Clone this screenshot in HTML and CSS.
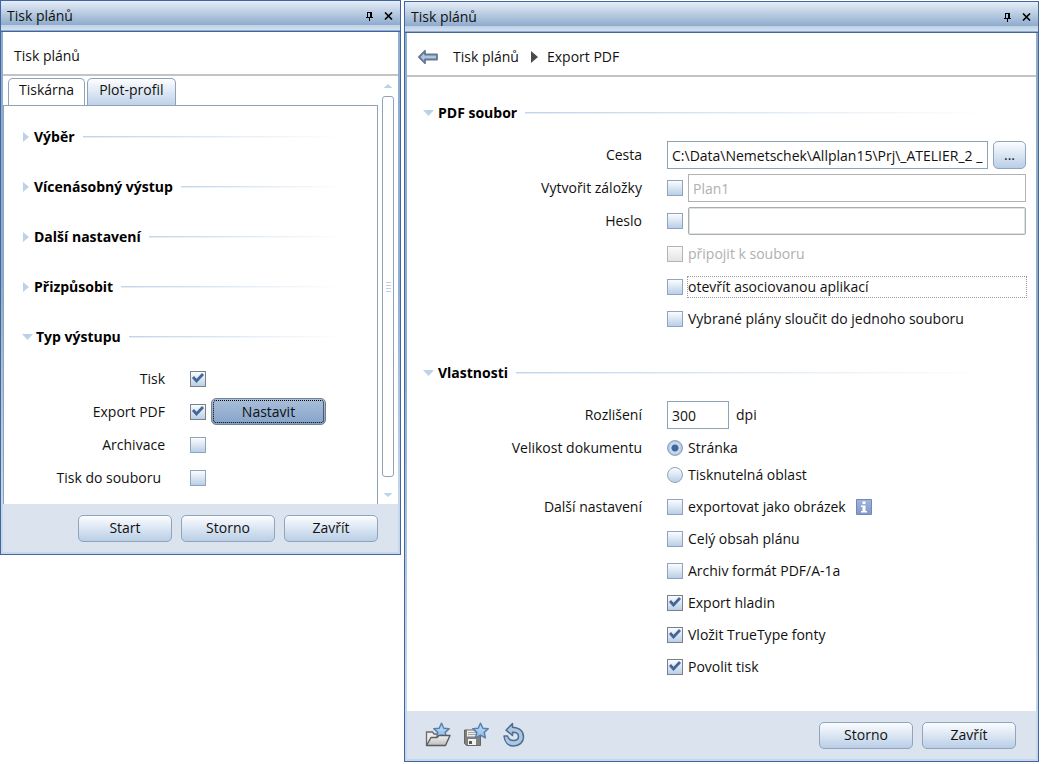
FILE: index.html
```html
<!DOCTYPE html>
<html lang="cs">
<head>
<meta charset="utf-8">
<title>Tisk plánů</title>
<link rel="stylesheet" href="styles.css">
</head>
<body>
<section class="panel panel-side">
  <div class="titlebar">
    <span class="titlebar-text">Tisk plánů</span>
    <button class="win-btn" aria-label="Připnout"><svg width="7" height="9" viewBox="0 0 7 9" shape-rendering="crispEdges"><path d="M1 0h5v5h1v1H4v3H3V6H0V5h1zM2 1v4h2V1z" fill-rule="evenodd"/></svg></button>
    <button class="win-btn" aria-label="Zavřít panel"><svg width="9" height="8" viewBox="0 0 9 8"><path d="M1 .5l7 7M8 .5l-7 7" stroke="#000" stroke-width="1.6"/></svg></button>
  </div>
  <div class="inner">
    <header class="crumbs crumbs-side">Tisk plánů</header>
    <div class="side-body">
      <div class="tab-area">
        <div class="tabs" role="tablist">
          <button class="tab tab-active" role="tab" aria-selected="true">Tiskárna</button>
          <button class="tab" role="tab" aria-selected="false">Plot-profil</button>
        </div>
        <div class="pane">
          <h2 class="heading"><button class="fold"><span class="tri tri-right"></span>Výběr</button></h2>
          <h2 class="heading"><button class="fold"><span class="tri tri-right"></span>Vícenásobný výstup</button></h2>
          <h2 class="heading"><button class="fold"><span class="tri tri-right"></span>Další nastavení</button></h2>
          <h2 class="heading"><button class="fold"><span class="tri tri-right"></span>Přizpůsobit</button></h2>
          <h2 class="heading"><button class="fold"><span class="tri tri-down"></span>Typ výstupu</button></h2>
          <div class="outputs">
            <div class="output"><label for="o1">Tisk</label><input type="checkbox" id="o1" checked></div>
            <div class="output"><label for="o2">Export PDF</label><input type="checkbox" id="o2" checked><button class="btn btn-pressed">Nastavit</button></div>
            <div class="output"><label for="o3">Archivace</label><input type="checkbox" id="o3"></div>
            <div class="output"><label class="label-inset" for="o4">Tisk do souboru</label><input type="checkbox" id="o4"></div>
          </div>
        </div>
      </div>
      <div class="scroll">
        <span class="scroll-up"></span>
        <div class="thumb"><span class="grip"></span></div>
        <span class="scroll-down"></span>
      </div>
    </div>
    <footer class="footer">
      <button class="btn">Start</button>
      <button class="btn">Storno</button>
      <button class="btn">Zavřít</button>
    </footer>
  </div>
</section>

<section class="panel panel-main">
  <div class="titlebar">
    <span class="titlebar-text">Tisk plánů</span>
    <button class="win-btn" aria-label="Připnout"><svg width="7" height="9" viewBox="0 0 7 9" shape-rendering="crispEdges"><path d="M1 0h5v5h1v1H4v3H3V6H0V5h1zM2 1v4h2V1z" fill-rule="evenodd"/></svg></button>
    <button class="win-btn" aria-label="Zavřít panel"><svg width="9" height="8" viewBox="0 0 9 8"><path d="M1 .5l7 7M8 .5l-7 7" stroke="#000" stroke-width="1.6"/></svg></button>
  </div>
  <div class="inner">
    <header class="crumbs">
      <button class="back" aria-label="Zpět"><svg width="22" height="16" viewBox="0 0 22 16"><path d="M2 8 8 1.800V5.500h12v5H8v3.700z" fill="#a9c6e6" stroke="#66788e" stroke-width="1.800" stroke-linejoin="round"/></svg></button>
      <span>Tisk plánů</span>
      <svg class="crumb-sep" width="7" height="12" viewBox="0 0 7 12"><path d="M0 0l7 6-7 6z" fill="#484a4e"/></svg>
      <span>Export PDF</span>
    </header>
    <form class="form">
      <h2 class="heading"><button type="button" class="fold"><span class="tri tri-down"></span>PDF soubor</button></h2>
      <div class="rows">
        <div class="row"><label class="name" for="path">Cesta</label><div class="field"><input class="text grow" type="text" id="path" value="C:\Data\Nemetschek\Allplan15\Prj\_ATELIER_2 _"><button type="button" class="btn btn-more">...</button></div></div>
        <div class="row"><label class="name" for="marks">Vytvořit záložky</label><div class="field"><input type="checkbox" id="marks"><input class="text grow text-off" type="text" aria-label="Název záložky" value="Plan1" disabled></div></div>
        <div class="row"><label class="name" for="pass">Heslo</label><div class="field"><input type="checkbox" id="pass"><input class="text grow text-sunken" type="password" aria-label="Heslo" disabled></div></div>
        <div class="row"><div class="field"><input type="checkbox" id="attach" disabled><label class="off" for="attach">připojit k souboru</label></div></div>
        <div class="row row-low"><div class="field"><input type="checkbox" id="open"><label class="focused" for="open">otevřít asociovanou aplikací</label></div></div>
        <div class="row row-low"><div class="field"><input type="checkbox" id="merge"><label for="merge">Vybrané plány sloučit do jednoho souboru</label></div></div>
      </div>
      <h2 class="heading"><button type="button" class="fold"><span class="tri tri-down"></span>Vlastnosti</button></h2>
      <div class="rows rows-last">
        <div class="row"><label class="name" for="dpi">Rozlišení</label><div class="field"><input class="text text-dpi" type="text" id="dpi" value="300"><span class="unit">dpi</span></div></div>
        <div class="row-pair" role="radiogroup" aria-labelledby="size">
          <div class="row row-low"><span class="name" id="size">Velikost dokumentu</span><div class="field"><input type="radio" name="size" id="page" checked><label for="page">Stránka</label></div></div>
          <div class="row row-low"><div class="field"><input type="radio" name="size" id="area"><label for="area">Tisknutelná oblast</label></div></div>
        </div>
        <div class="row row-low"><span class="name">Další nastavení</span><div class="field"><input type="checkbox" id="img"><label for="img">exportovat jako obrázek</label><svg class="info" width="16" height="16" viewBox="0 0 16 16"><defs><linearGradient id="ig" x2="0" y2="1"><stop stop-color="#a3b5d9"/><stop offset="1" stop-color="#8199c8"/></linearGradient></defs><path d="M.5.5h15v15H.5z" fill="url(#ig)" stroke="#7189b8"/><path d="M6.500 2.500h3v2.500h-3zM5 6.500h4.500V12H11v1.500H5V12h1.500V8H5z" fill="#fff"/></svg></div></div>
        <div class="row row-low"><div class="field"><input type="checkbox" id="all"><label for="all">Celý obsah plánu</label></div></div>
        <div class="row row-low"><div class="field"><input type="checkbox" id="pdfa"><label for="pdfa">Archiv formát PDF/A-1a</label></div></div>
        <div class="row row-low"><div class="field"><input type="checkbox" id="layers" checked><label for="layers">Export hladin</label></div></div>
        <div class="row row-low"><div class="field"><input type="checkbox" id="fonts" checked><label for="fonts">Vložit TrueType fonty</label></div></div>
        <div class="row row-low"><div class="field"><input type="checkbox" id="print" checked><label for="print">Povolit tisk</label></div></div>
      </div>
    </form>
    <footer class="footer">
      <div class="tools">
        <button class="tool" aria-label="Načíst oblíbené"><svg width="26" height="26" viewBox="0 0 26 26"><defs><linearGradient id="sg" x2="0" y2="1"><stop stop-color="#c5e0fa"/><stop offset="1" stop-color="#8db9e6"/></linearGradient><linearGradient id="fg" x2="0" y2="1"><stop stop-color="#f2f2f2"/><stop offset="1" stop-color="#bdbdbd"/></linearGradient></defs><path d="M1.500 23.500V10h6l1.500 2H19v3" fill="#ececec" stroke="#696969" stroke-width="1.300"/><path d="M16.500 1.200l2.300 5 5.400.5-4 3.700 1.200 5.400-4.900-2.700-4.900 2.700 1.200-5.400-4-3.700 5.400-.5z" fill="url(#sg)" stroke="#5a7fab" stroke-width="1.500" stroke-linejoin="round"/><path d="M1.500 23.500L6 15.500h6l2-2h11l-4.500 10z" fill="url(#fg)" stroke="#5c5c5c" stroke-width="1.400" stroke-linejoin="round"/></svg></button>
        <button class="tool" aria-label="Uložit oblíbené"><svg width="26" height="26" viewBox="0 0 26 26"><path d="M1.500 8h16v15.500h-14l-2-2z" fill="#808080" stroke="#656565"/><path d="M4 8.500h11v6H4z" fill="#eee"/><path d="M5 10.500h8M5 12.500h9" stroke="#a5a5a5"/><path d="M5 17h8v6H5z" fill="#f0f0f0"/><path d="M6 19h3v3H6z" fill="#585858"/><path d="M17.500 1.200l2.300 5 5.400.5-4 3.700 1.200 5.400-4.900-2.700-4.900 2.700 1.200-5.400-4-3.700 5.400-.5z" fill="url(#sg)" stroke="#5a7fab" stroke-width="1.500" stroke-linejoin="round"/></svg></button>
        <button class="tool" aria-label="Obnovit"><svg width="26" height="26" viewBox="0 0 26 26"><path d="M11.500 1.500L5 8.200l6.500 5.300v-3.200c4 0 6 2 6 4.200 0 2.500-2.200 4-5 4-3 0-5-1.500-6-4.500H3c.5 6.500 4.500 10 9.500 10 6 0 10-4 10-9 0-5.500-4-9.500-11-9.800z" fill="#a7c8e9" stroke="#536c89" stroke-width="1.500" stroke-linejoin="round"/></svg></button>
      </div>
      <button class="btn">Storno</button>
      <button class="btn">Zavřít</button>
    </footer>
  </div>
</section>
</body>
</html>
```
FILE: styles.css
```css
* { box-sizing: border-box; }

body {
  margin: 0;
  min-height: 100vh;
  padding: 0 2px 2px 0;
  display: flex;
  align-items: flex-start;
  gap: 3px;
  background: #fff;
  color: #111;
  font: 14px/20px "Open Sans", "Noto Sans", sans-serif;
}

button, input { font: inherit; color: inherit; margin: 0; }
button { padding: 0; border: 0; background: none; }

.panel {
  display: flex;
  flex-direction: column;
  border: 1px solid #41659c;
  background: linear-gradient(#8fadcf 0%, #8fadcf 50%, #c6d8eb 90%);
}
.panel-side { flex: 0 1 401px; }
.panel-main { flex: 1; align-self: stretch; margin-top: 1px; }

.titlebar {
  display: flex;
  align-items: center;
  gap: 8px;
  height: 31px;
  padding: 0 6px;
  border-bottom: 1px solid #41659c;
  background:
    linear-gradient(#8eaccf, #8eaccf) 0 29px / 100% 1px no-repeat,
    linear-gradient(#bed0e5, #d3e0ef) 0 24px / 100% 5px no-repeat,
    linear-gradient(#e5edf7, #8eabcd) 0 0 / 100% 24px no-repeat;
}
.titlebar-text { flex: 1; }
.win-btn { width: 11px; height: 20px; display: grid; place-items: center; }

.inner {
  flex: 1;
  display: flex;
  flex-direction: column;
  margin: 0 2px 2px;
  background: #fff;
}

.crumbs {
  display: flex;
  align-items: center;
  height: 44px;
  padding: 5px 10px 0;
  border-bottom: 2px solid #c4c4c4;
}
.crumbs-side { padding-left: 11px; }
.back { margin-right: 14px; display: grid; }
.crumb-sep { margin: 0 9px 0 12px; }

.side-body { display: flex; padding-top: 2px; }
.tab-area { flex: 1; min-width: 0; }
.tabs { display: flex; gap: 2px; padding-left: 5px; }
.tab {
  height: 27px;
  padding: 0 11px 4px;
  border: 1px solid #8fa2b8;
  border-bottom: 0;
  border-radius: 5px 5px 0 0;
  background: linear-gradient(#fdfdff, #bed2e9);
}
.tab-active { padding: 0 10px 4px; background: #fff; }
.pane {
  padding: 21px 34px 10px 18px;
  border: 1px solid #8fa2b8;
  border-bottom: 0;
}

.heading {
  display: flex;
  align-items: center;
  gap: 8px;
  margin: 0;
  font-size: 14px;
  font-weight: 700;
}
.heading::after {
  content: "";
  flex: 1;
  height: 2px;
  background:
    linear-gradient(90deg, #c0d5ea, #fff) 0 0 / 100% 1px no-repeat,
    linear-gradient(90deg, #e4edf6, #fff);
}
.pane .heading + .heading { margin-top: 30px; }
.fold { display: flex; align-items: center; font-weight: 700; color: #000; }
.tri { width: 12px; height: 10px; }
.tri::before { content: ""; display: block; background: #bcd2ea; }
.tri-right::before { width: 6px; height: 10px; margin-left: 1px; clip-path: polygon(0 0, 100% 50%, 0 100%); }
.tri-down { width: 15px; height: 6px; }
.pane .tri-down { width: 14px; }
.tri-down::before { width: 11px; height: 6px; clip-path: polygon(0 0, 100% 0, 50% 100%); }

.outputs { padding-top: 15px; }
.output { display: flex; align-items: center; height: 33px; }
.output label { width: 143px; margin-right: 25px; text-align: right; }
.output .label-inset { padding-right: 4px; }
.output .btn { width: 115px; margin-left: 5px; }

.scroll {
  width: 20px;
  padding: 6px 4px 7px;
  display: flex;
  flex-direction: column;
  align-items: center;
  gap: 8px;
}
.scroll-up, .scroll-down { width: 9px; height: 4px; background: #bcd2ea; clip-path: polygon(50% 0, 100% 100%, 0 100%); }
.scroll-down { margin-top: 8px; clip-path: polygon(0 0, 100% 0, 50% 100%); }
.thumb {
  flex: 1;
  align-self: stretch;
  display: grid;
  place-items: center;
  border: 1px solid #8fa2b8;
  border-radius: 3px;
}
.grip { width: 5px; height: 10px; background: repeating-linear-gradient(#bcd2ea 0 1px, #fff 1px 3px); }

.footer {
  display: flex;
  align-items: center;
  justify-content: flex-end;
  gap: 9px;
  height: 48px;
  padding-right: 20px;
  background: #dbe3ee;
}
.footer .btn { width: 94px; }
.tools { margin-right: auto; padding-left: 18px; display: flex; gap: 12px; }
.tool { display: grid; }

.btn {
  height: 27px;
  border: 1px solid #8fa5bd;
  border-radius: 5px;
  background: linear-gradient(#fcfdff, #b9cee6);
}
.btn-more { width: 33px; height: 28px; }
.btn-pressed {
  border-color: #74818f;
  background: linear-gradient(#a9bfdb, #86a3c8);
  outline: 1px dotted #000;
  outline-offset: -3px;
}

.form { flex: 1; padding: 26px 10px 0 16px; }
.form .heading { margin-right: 34px; }
.rows { padding: 18px 0 31px 1px; display: flex; flex-direction: column; gap: 5px; }
.rows-last { padding-bottom: 16px; }
.row { display: grid; grid-template-columns: 218px 1fr; column-gap: 25px; align-items: center; height: 28px; }
.row-low { height: 27px; }
.name { text-align: right; }
.field { grid-column: 2; min-width: 0; display: flex; align-items: center; gap: 5px; }
.grow { flex: 1; min-width: 0; }
.off { color: #b0b0b0; }
.focused { flex: 1; outline: 1px dotted #999; }
.unit { margin-left: 2px; }
.info { margin-left: 5px; }

.text { height: 28px; padding: 0 4px; border: 1px solid #8fa2b8; border-radius: 0; background: #fff; }
.text-dpi { width: 62px; }
.text-off { border-color: #b2b2b2; color: #b0b0b0; }
.text-sunken { border-color: #a9aeb0; border-radius: 2px; box-shadow: inset 0 0 0 1px #dfe3e3; }

input[type="checkbox"], input[type="radio"] {
  appearance: none;
  flex: none;
  width: 16px;
  height: 16px;
  border: 1px solid #8fa5bd;
  background: linear-gradient(#fbfcfe, #b9cfe7);
}
input[type="checkbox"]:checked {
  border-color: #7c8087;
  background:
    url("data:image/svg+xml,%3Csvg xmlns='http://www.w3.org/2000/svg' viewBox='0 0 14 14'%3E%3Cpath d='M2 5l3.500 4L12 2' fill='none' stroke='%23436699' stroke-width='2.800'/%3E%3C/svg%3E"),
    linear-gradient(#fbfcfe, #b9cfe7);
}
input[type="checkbox"]:disabled { border-color: #b4b4b4; background: linear-gradient(#fafafa, #e4e4e4); }
input[type="radio"] { border-radius: 50%; }
input[type="radio"]:checked {
  background: radial-gradient(circle, #41659c 0 3px, #c9dbee 4px 5px, #a5bddb 7px);
}
```
